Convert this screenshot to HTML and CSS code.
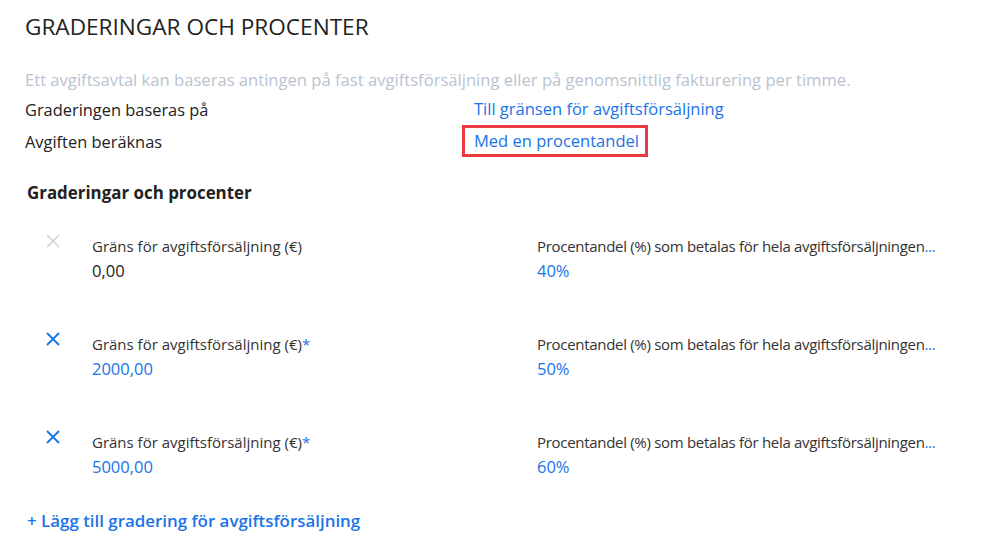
FILE: index.html
```html
<!DOCTYPE html>
<html lang="sv">
<head>
<meta charset="utf-8">
<title>Graderingar och procenter</title>
<link rel="stylesheet" href="styles.css">
</head>
<body>
<main class="page">
  <h1 class="title">GRADERINGAR OCH PROCENTER</h1>
  <p class="hint">Ett avgiftsavtal kan baseras antingen på fast avgiftsförsäljning eller på genomsnittlig fakturering per timme.</p>
  <div class="setting">
    <span class="setting-label">Graderingen baseras på</span>
    <a class="link setting-value">Till gränsen för avgiftsförsäljning</a>
  </div>
  <div class="setting">
    <span class="setting-label">Avgiften beräknas</span>
    <a class="link setting-value highlighted">Med en procentandel</a>
  </div>

  <h2 class="section">Graderingar och procenter</h2>

  <div class="tiers">
    <div class="tier">
      <span class="remove disabled"><svg viewBox="0 0 14 14" width="14" height="14"><path d="M1 1L13 13M13 1L1 13" /></svg></span>
      <div class="field">
        <div class="field-label">Gräns för avgiftsförsäljning (€)</div>
        <div class="field-value plain">0,00</div>
      </div>
      <div class="field">
        <div class="field-label long">Procentandel (%) som betalas för hela avgiftsförsäljningen<span class="more">...</span></div>
        <div class="field-value">40%</div>
      </div>
    </div>
    <div class="tier">
      <span class="remove"><svg viewBox="0 0 14 14" width="14" height="14"><path d="M1 1L13 13M13 1L1 13" /></svg></span>
      <div class="field">
        <div class="field-label">Gräns för avgiftsförsäljning (€)<span class="req">*</span></div>
        <div class="field-value">2000,00</div>
      </div>
      <div class="field">
        <div class="field-label long">Procentandel (%) som betalas för hela avgiftsförsäljningen<span class="more">...</span></div>
        <div class="field-value">50%</div>
      </div>
    </div>
    <div class="tier">
      <span class="remove"><svg viewBox="0 0 14 14" width="14" height="14"><path d="M1 1L13 13M13 1L1 13" /></svg></span>
      <div class="field">
        <div class="field-label">Gräns för avgiftsförsäljning (€)<span class="req">*</span></div>
        <div class="field-value">5000,00</div>
      </div>
      <div class="field">
        <div class="field-label long">Procentandel (%) som betalas för hela avgiftsförsäljningen<span class="more">...</span></div>
        <div class="field-value">60%</div>
      </div>
    </div>
  </div>

  <a class="link add">+ Lägg till gradering för avgiftsförsäljning</a>
</main>
</body>
</html>
```

FILE: styles.css
```css
html, body {
  margin: 0;
  background: #ffffff;
}

body {
  font-family: "Open Sans", "Noto Sans", sans-serif;
  color: #222222;
}

.page {
  padding: 12px 0 0 25px;
  width: 960px;
}

.title {
  margin: 0;
  font-size: 22.6px;
  font-weight: 400;
  line-height: 30px;
  color: #222;
}

.hint {
  margin: 24px 0 0 0;
  font-size: 16.6px;
  line-height: 27px;
  color: #b9c3d1;
  white-space: nowrap;
}

.setting {
  display: flex;
  align-items: center;
  height: 32px;
}

.setting-label {
  width: 449px;
  font-size: 16.4px;
}

.link {
  color: #1a73e8;
  cursor: pointer;
}

.setting-value {
  font-size: 16.5px;
  line-height: 22px;
}

.highlighted {
  margin-left: -12px;
  padding: 2px 6px 2px 9px;
  border: 3px solid #ed3a3f;
}

.section {
  margin: 25px 0 0 2px;
  font-size: 16.9px;
  font-weight: 700;
  line-height: 22px;
}

.tiers {
  margin-top: 30px;
  display: flex;
  flex-direction: column;
  gap: 48px;
}

.tier {
  display: grid;
  grid-template-columns: 67px 445px 1fr;
  height: 50px;
}

.remove {
  padding: 0 0 0 21px;
}

.remove svg {
  display: block;
  stroke: #1a73e8;
  stroke-width: 1.9;
  fill: none;
}

.remove.disabled svg {
  stroke: #c7ced8;
  stroke-width: 1.4;
}

.field-label {
  font-size: 15px;
  line-height: 24px;
  color: #333;
  white-space: nowrap;
}

.field-label.long {
  letter-spacing: -0.3px;
}

.more,
.req {
  color: #1a73e8;
}

.field-value {
  font-size: 16.5px;
  line-height: 26px;
  color: #1a73e8;
}

.field-value.plain {
  color: #222;
}

.add {
  display: inline-block;
  margin: 29px 0 0 2px;
  font-size: 16.9px;
  font-weight: 600;
}
```
